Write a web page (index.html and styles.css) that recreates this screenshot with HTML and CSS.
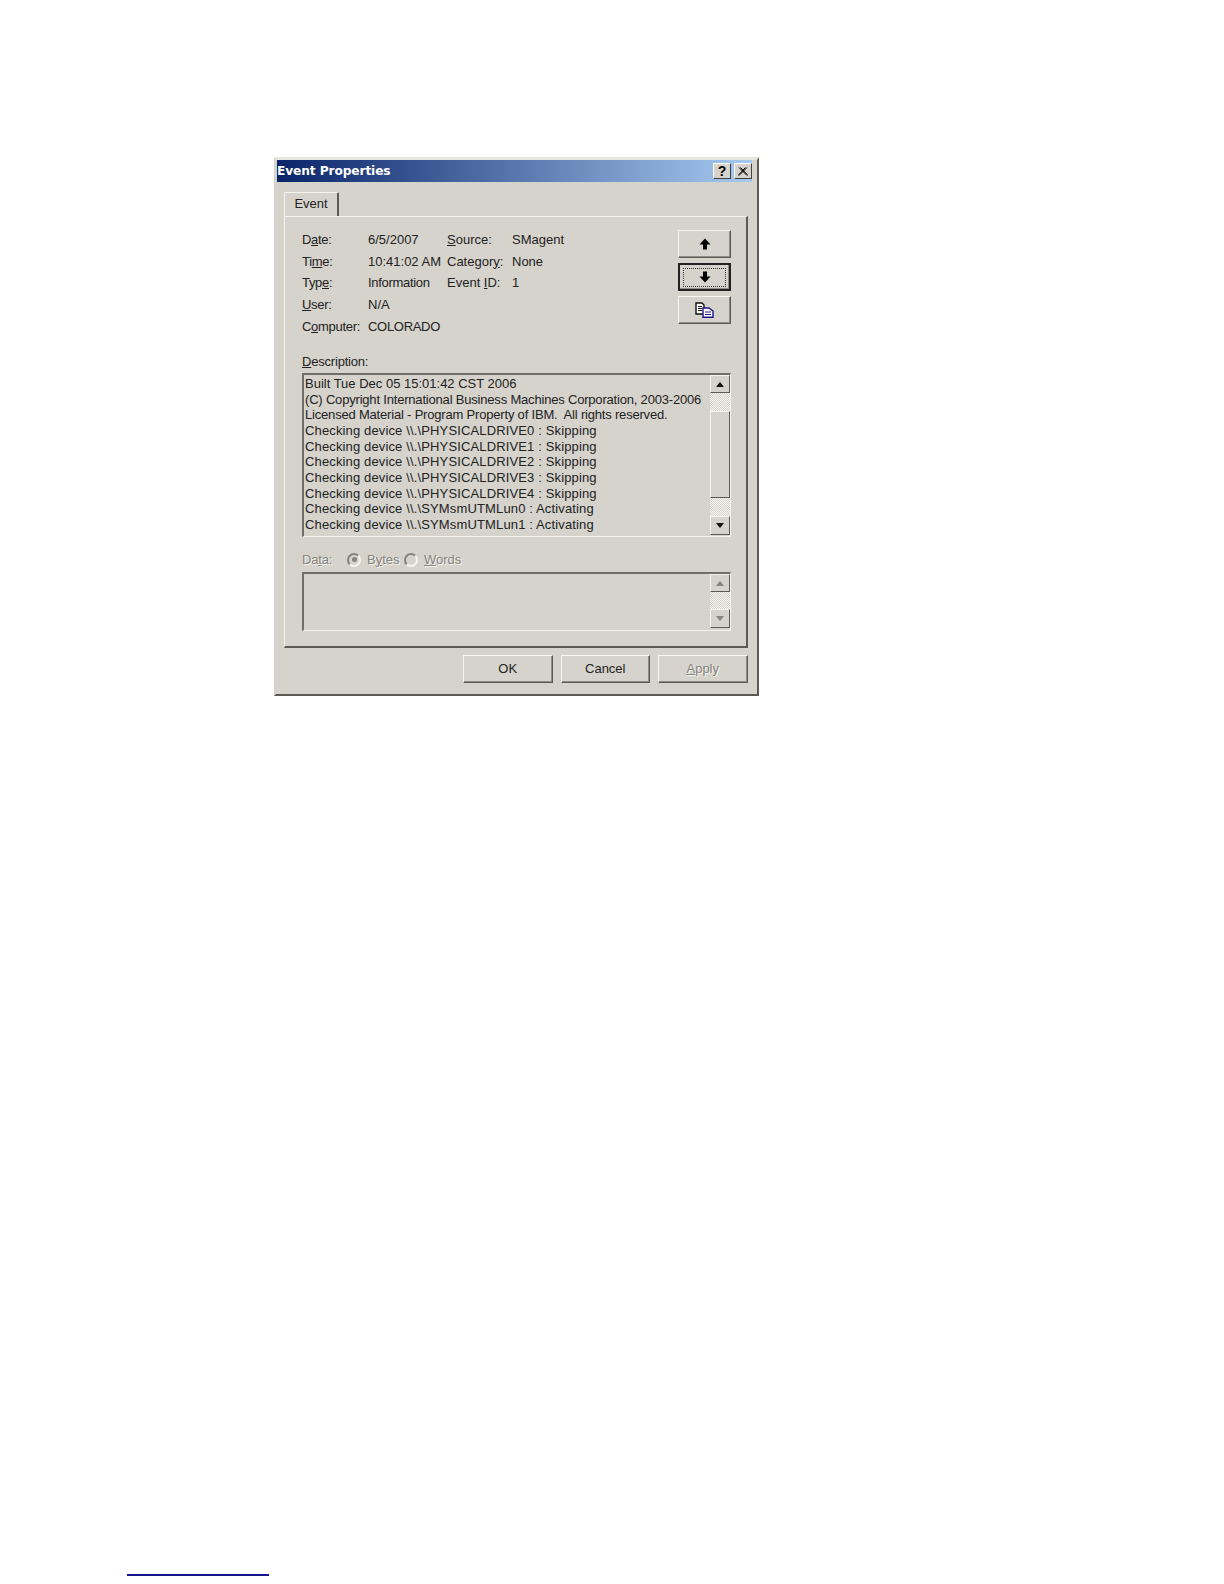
FILE: index.html
```html
<!DOCTYPE html>
<html lang="en">
<head>
<meta charset="utf-8">
<title>Event Properties</title>
<link rel="stylesheet" href="styles.css">
</head>
<body>
<main class="dialog">
  <header class="titlebar">
    <span class="title">Event Properties</span>
    <span class="capbtn help">?</span>
    <span class="capbtn close"><svg width="10" height="9" viewBox="0 0 10 9"><path d="M1 0.5L9 8.5M2.5 0.5L10 8.5M9 0.5L1 8.5M7.5 0.5L0 8.5" stroke="#000" stroke-width="1" fill="none"/></svg></span>
  </header>
  <div class="tabstrip"><span class="tab">Event</span></div>
  <section class="panel">
    <div class="top">
      <div class="fields">
        <span>D<u>a</u>te:</span><span>6/5/2007</span><span><u>S</u>ource:</span><span>SMagent</span>
        <span>Ti<u>m</u>e:</span><span>10:41:02 AM</span><span>Categor<u>y</u>:</span><span>None</span>
        <span>Typ<u>e</u>:</span><span class="narrow">Information</span><span>Event <u>I</u>D:</span><span>1</span>
        <span><u>U</u>ser:</span><span>N/A</span><span></span><span></span>
        <span>C<u>o</u>mputer:</span><span class="narrow">COLORADO</span><span></span><span></span>
      </div>
      <div class="nav">
        <button class="btn navbtn"><svg width="12" height="12" viewBox="0 0 12 12"><path d="M6 0.5L11.5 6.5H8V11.5H4V6.5H0.5Z" fill="#000"/></svg></button>
        <button class="btn navbtn focused"><span class="focusring"><svg width="12" height="12" viewBox="0 0 12 12"><path d="M6 11.5L11.5 5.5H8V0.5H4V5.5H0.5Z" fill="#000"/></svg></span></button>
        <button class="btn navbtn"><svg width="19" height="16" viewBox="0 0 19 16"><path d="M1 1H7L9 3V12H1Z" fill="#fff" stroke="#111" stroke-width="1.4"/><path d="M3 4.5H7M3 6.5H7M3 8.5H7" stroke="#111"/><path d="M8 6H14L18 9V15.2H8Z" fill="#fff" stroke="#1c1488" stroke-width="1.4"/><path d="M10 10H16M10 12.5H16" stroke="#1c1488"/></svg></button>
      </div>
    </div>
    <div class="desc-label"><u>D</u>escription:</div>
    <div class="box desc">
      <div class="lines">
        <div>Built Tue Dec 05 15:01:42 CST 2006</div>
        <div class="tight">(C) Copyright International Business Machines Corporation, 2003-2006</div>
        <div class="tight">Licensed Material - Program Property of IBM.&nbsp; All rights reserved.</div>
        <div class="loose">Checking device \\.\PHYSICALDRIVE0 : Skipping</div>
        <div class="loose">Checking device \\.\PHYSICALDRIVE1 : Skipping</div>
        <div class="loose">Checking device \\.\PHYSICALDRIVE2 : Skipping</div>
        <div class="loose">Checking device \\.\PHYSICALDRIVE3 : Skipping</div>
        <div class="loose">Checking device \\.\PHYSICALDRIVE4 : Skipping</div>
        <div class="loose">Checking device \\.\SYMsmUTMLun0 : Activating</div>
        <div class="loose">Checking device \\.\SYMsmUTMLun1 : Activating</div>
      </div>
      <div class="scroll">
        <span class="sbtn"><i class="tri-up"></i></span>
        <span class="dither d1"></span>
        <span class="thumb"></span>
        <span class="dither d1"></span>
        <span class="sbtn down"><i class="tri-down"></i></span>
      </div>
    </div>
    <div class="datarow disabled">
      <span class="datalabel">Da<u>t</u>a:</span>
      <span class="radio checked"></span>
      <span class="bytes">B<u>y</u>tes</span>
      <span class="radio"></span>
      <span><u>W</u>ords</span>
    </div>
    <div class="box data">
      <div class="lines"></div>
      <div class="scroll">
        <span class="sbtn"><i class="tri-up off"></i></span>
        <span class="dither d2"></span>
        <span class="sbtn down"><i class="tri-down off"></i></span>
      </div>
    </div>
  </section>
  <footer class="footer">
    <button class="btn act">OK</button>
    <button class="btn act">Cancel</button>
    <button class="btn act disabled"><u>A</u>pply</button>
  </footer>
</main>
<div class="footnote-rule"></div>
</body>
</html>
```
FILE: styles.css
```css
* { box-sizing: border-box; }
html, body { margin: 0; height: 100%; background: #fff; overflow: hidden; }
body { padding: 157px 0 0 127px; font: 13px/15.67px "Liberation Sans", Arial, sans-serif; color: #222; }

.dialog {
  width: 485px; height: 539px; margin-left: 147px;
  background: #d6d3cc;
  border-style: solid; border-width: 3px 2px 2px 2px;
  border-color: #e6e6e0 #5c5a55 #5c5a55 #d6d3cc;
  display: flex; flex-direction: column;
  padding: 0 0 0 1px;
}

.titlebar {
  height: 22px; flex: none; margin-right: 5px;
  background: linear-gradient(90deg, #0a246a 0%, #a6caf0 100%);
  display: flex; align-items: center; gap: 3px;
}
.title { flex: 1; color: #fff; font: bold 12.2px "DejaVu Sans", sans-serif; letter-spacing: -0.1px; }
.capbtn {
  width: 18px; height: 16px; background: #d6d3cc;
  border: 1px solid; border-color: #fff #404040 #404040 #fff;
  display: flex; align-items: center; justify-content: center;
  font: bold 14px "Liberation Sans", sans-serif; color: #000;
}

.tabstrip { height: 34px; flex: none; padding: 10px 0 0 7px; display: flex; }
.tab {
  width: 55px; height: 24px; border: 1px solid; border-width: 1px 2px 0 1px;
  border-color: #f4f4f0 #5c5a55 transparent #f4f4f0; border-radius: 2px 2px 0 0;
  text-align: center; line-height: 21px;
}

.panel {
  width: 464px; height: 432px; margin-left: 7px; flex: none;
  border: solid; border-width: 1px 2px 2px 1px;
  border-color: #f4f4f0 #5c5a55 #5c5a55 #f4f4f0;
  padding: 12px 14px 0 17px;
}
.top { display: flex; justify-content: space-between; height: 125px; }
.fields {
  display: grid; grid-template-columns: 66px 79px 65px auto;
  grid-auto-rows: 21.67px; align-items: center;
}
.fields span:nth-child(4n+1) { letter-spacing: -0.3px; }
.narrow { letter-spacing: -0.3px; }
.nav { display: flex; flex-direction: column; padding-top: 1px; padding-right: 1px; }

.btn {
  font: inherit; color: inherit; padding: 0; background: #d6d3cc;
  border: 1px solid; border-color: #f6f6f2 #5c5a55 #5c5a55 #f6f6f2;
  box-shadow: inset -1px -1px 0 #8f8c85;
  display: flex; align-items: center; justify-content: center;
}
.navbtn { width: 53px; height: 28px; margin-bottom: 5px; flex: none; }
.navbtn.focused { border: 2px solid #222; }
.focusring {
  width: 43px; height: 19px; border: 1px dotted #333;
  display: flex; align-items: center; justify-content: center;
}

.desc-label { height: 19px; letter-spacing: -0.2px; }

.box {
  width: 429px; display: flex;
  border: solid; border-width: 2px 1px 1px 2px;
  border-color: #706e68 #f4f4f0 #f4f4f0 #706e68;
}
.desc { height: 164px; }
.data { height: 59px; }
.lines { flex: 1; min-width: 0; padding: 1px 0 0 1px; color: #222; white-space: nowrap; }
.lines div { height: 15.67px; }
.tight { letter-spacing: -0.19px; }
.loose { letter-spacing: 0.14px; }

.scroll { width: 20px; flex: none; display: flex; flex-direction: column; }
.sbtn, .thumb {
  background: #d6d3cc; display: flex; align-items: center; justify-content: center;
  border: 1px solid; border-color: #f4f4f0 #5c5a55 #5c5a55 #f4f4f0;
}
.sbtn { height: 18px; flex: none; }
.sbtn.down { height: 19px; }
.thumb { height: 87px; flex: none; }
.dither { background: repeating-conic-gradient(#f4f4f0 0 25%, #d6d3cc 0 50%) 0 0 / 2px 2px; }
.d1 { height: 18px; }
.d2 { height: 17px; }
.tri-up, .tri-down { width: 0; height: 0; border: 4.5px solid transparent; }
.tri-up { border-top: 0; border-bottom: 5px solid #111; }
.tri-down { border-bottom: 0; border-top: 5px solid #111; }
.tri-up.off { border-bottom-color: #85837d; }
.tri-down.off { border-top-color: #85837d; }

.disabled { color: #85837d; text-shadow: 1px 1px 0 #f6f6f2; }
.datarow { height: 35px; padding-top: 10px; display: flex; align-items: center; }
.datalabel { width: 45px; letter-spacing: -0.2px; }
.bytes { width: 37px; }
.radio {
  width: 14px; height: 14px; border-radius: 50%; margin-right: 6px; flex: none;
  border: 2px solid; border-color: #85837d #f4f4f0 #f4f4f0 #85837d;
  display: flex; align-items: center; justify-content: center;
}
.radio.checked::after { content: ""; width: 5px; height: 5px; border-radius: 50%; background: #85837d; }

.footer { flex: none; display: flex; gap: 8px; justify-content: flex-end; padding: 7px 9.5px 0 0; }
.act { width: 89.5px; height: 28px; }
.footnote-rule { width: 142px; height: 2px; margin-top: 878px; background: #14148c; }
```
